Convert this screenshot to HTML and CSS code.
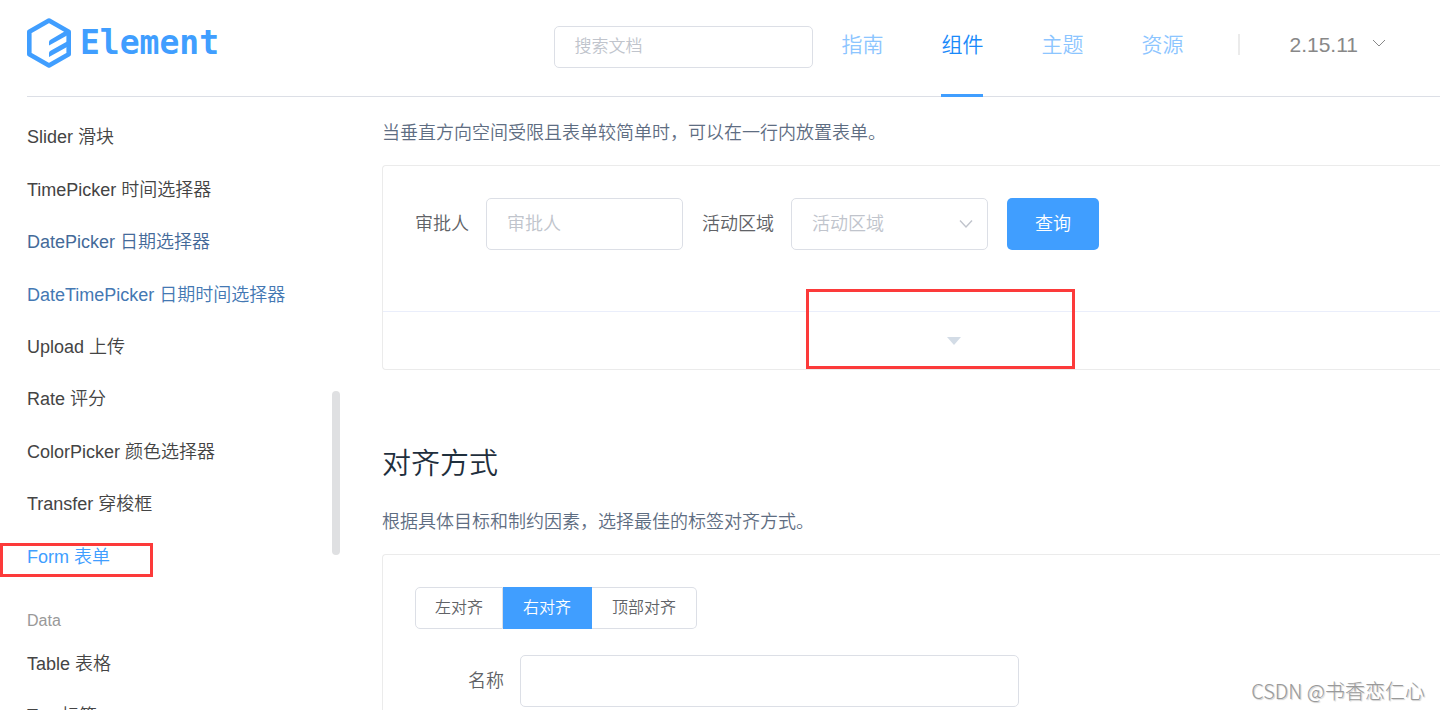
FILE: index.html
```html
<!DOCTYPE html>
<html lang="zh-CN">
<head>
<meta charset="utf-8">
<title>Element</title>
<link rel="stylesheet" href="styles.css">
</head>
<body>
<header class="header">
  <a class="logo" href="#">
    <svg class="logo-mark" viewBox="0 0 44 50" aria-hidden="true">
      <path d="M22 2.6 41.7 13.8V36.2L22 47.4 2.3 36.2V13.8Z" fill="none" stroke="#409eff" stroke-width="4.6" stroke-linejoin="round"/>
      <path d="M22 27.500V24Q22 22.500 23.500 21.700L40 12V17.500ZM22 39V35Q22 33.600 23.500 32.800L40 23.500V29Z" fill="#409eff"/>
    </svg>
    <span class="logo-text">Element</span>
  </a>
  <input class="search" type="text" placeholder="搜索文档" aria-label="搜索文档">
  <nav class="nav">
    <a class="nav-item" href="#">指南</a>
    <a class="nav-item nav-item-active" href="#">组件</a>
    <a class="nav-item" href="#">主题</a>
    <a class="nav-item" href="#">资源</a>
  </nav>
  <span class="divider"></span>
  <button class="version" type="button">2.15.11
    <svg class="version-arrow" viewBox="0 0 14 10" aria-hidden="true"><path d="M1 1 7 7 13 1" fill="none" stroke="#888" stroke-width="1"/></svg>
  </button>
</header>

<div class="page">
  <aside class="sidebar">
    <ul class="menu">
      <li><a class="menu-link" href="#">Slider 滑块</a></li>
      <li><a class="menu-link" href="#">TimePicker 时间选择器</a></li>
      <li><a class="menu-link menu-link-fading" href="#">DatePicker 日期选择器</a></li>
      <li><a class="menu-link menu-link-hover" href="#">DateTimePicker 日期时间选择器</a></li>
      <li><a class="menu-link" href="#">Upload 上传</a></li>
      <li><a class="menu-link" href="#">Rate 评分</a></li>
      <li><a class="menu-link" href="#">ColorPicker 颜色选择器</a></li>
      <li><a class="menu-link" href="#">Transfer 穿梭框</a></li>
      <li><a class="menu-link menu-link-active" href="#">Form 表单</a></li>
    </ul>
    <div class="menu-title">Data</div>
    <ul class="menu-data">
      <li><a class="menu-link" href="#">Table 表格</a></li>
      <li><a class="menu-link" href="#">Tag 标签</a></li>
    </ul>
    <span class="scroll-thumb"></span>
  </aside>

  <main class="content">
    <p class="text">当垂直方向空间受限且表单较简单时，可以在一行内放置表单。</p>
    <section class="demo">
      <form class="inline-form">
        <label class="label" for="approver">审批人</label>
        <input class="field" id="approver" type="text" placeholder="审批人">
        <label class="label" for="region">活动区域</label>
        <span class="select-wrap">
          <select class="field select" id="region"><option>活动区域</option></select>
          <svg class="select-arrow" viewBox="0 0 14 10" aria-hidden="true"><path d="M1 1.500 7 8 13 1.500" fill="none" stroke="#c0c4cc" stroke-width="1.400"/></svg>
        </span>
        <button class="submit" type="button">查询</button>
      </form>
      <button class="expand" type="button" aria-label="显示代码">
        <svg class="caret" viewBox="0 0 14 8" aria-hidden="true"><path d="M0 0H14L7 8Z" fill="#d3dce6"/></svg>
      </button>
    </section>

    <h3 class="heading">对齐方式</h3>
    <p class="text">根据具体目标和制约因素，选择最佳的标签对齐方式。</p>
    <section class="demo">
      <form class="align-form">
        <div class="radio-group">
          <label class="radio"><input type="radio" name="align">左对齐</label>
          <label class="radio"><input type="radio" name="align" checked>右对齐</label>
          <label class="radio"><input type="radio" name="align">顶部对齐</label>
        </div>
        <div class="form-row">
          <label class="row-label" for="name">名称</label>
          <input class="field name-field" id="name" type="text">
        </div>
      </form>
    </section>
  </main>
</div>

<span class="mark mark-menu"></span>
<span class="mark mark-expand"></span>
<span class="watermark">CSDN @书香恋仁心</span>
</body>
</html>
```
FILE: styles.css
```css
* {
  box-sizing: border-box;
}

body {
  position: relative;
  height: 100vh;
  margin: 0;
  overflow: hidden;
  background: #fff;
  color: #606266;
  font-family: "Liberation Sans", "Noto Sans CJK SC", sans-serif;
  font-size: 18px;
  font-weight: 350;
}

a {
  text-decoration: none;
}

ul {
  margin: 0;
  padding: 0;
  list-style: none;
}

input,
select,
button {
  margin: 0;
  font: inherit;
}

/* Header */
.header {
  display: flex;
  align-items: flex-start;
  height: 97px;
  margin-left: 27px;
  padding-right: 54px;
  border-bottom: 1px solid #dcdfe6;
}

.logo {
  display: flex;
  align-items: center;
  gap: 9px;
  margin: 17px auto 0 0;
  color: #409eff;
}

.logo-mark {
  width: 44px;
  height: 50px;
}

.logo-text {
  font-family: "DejaVu Sans Mono", monospace;
  font-size: 33px;
  font-weight: 700;
  line-height: 52px;
}

.search {
  width: 259px;
  height: 42px;
  margin-top: 26px;
  padding: 0 19px;
  border: 1px solid #dcdfe6;
  border-radius: 5px;
  font-size: 17px;
}

::placeholder {
  color: #c0c4cc;
  opacity: 1;
}

.nav {
  display: flex;
  gap: 58px;
  margin-left: 28px;
}

.nav-item {
  height: 97px;
  color: #8cc5ff;
  font-size: 21px;
  line-height: 90px;
}

.nav-item-active {
  border-bottom: 3px solid #409eff;
  color: #1989fa;
}

.divider {
  width: 2px;
  height: 21px;
  margin: 34px 49px 0 55px;
  background: #ebebeb;
}

.version {
  display: flex;
  align-items: center;
  gap: 14px;
  height: 90px;
  padding: 0;
  border: 0;
  background: none;
  color: #888;
  font-size: 21px;
}

.version-arrow {
  width: 14px;
  height: 10px;
  margin-bottom: 2px;
}

/* Sidebar */
.page {
  display: flex;
}

.sidebar {
  position: relative;
  flex: none;
  width: 340px;
  padding: 14px 0 0 27px;
}

.menu {
  display: grid;
  grid-auto-rows: 1fr;
  align-items: center;
  height: 472px;
}

.menu-link {
  color: #444;
  line-height: 52px;
}

.menu-link-fading {
  color: #446a99;
}

.menu-link-hover {
  color: #4478b3;
}

.menu-link-active {
  color: #409eff;
}

.menu-title {
  margin-top: 24px;
  color: #999;
  font-size: 16px;
  line-height: 28px;
}

.menu-data {
  padding-top: 3px;
}

.scroll-thumb {
  position: absolute;
  top: 294px;
  right: 0;
  width: 8px;
  height: 164px;
  border-radius: 4px;
  background: #dfe0e2;
}

/* Content */
.content {
  flex: 1;
  min-width: 0;
  padding: 23px 0 0 42px;
}

.text {
  margin: 0 0 18px;
  color: #5e6d82;
  line-height: 27px;
}

.heading {
  margin: 73px 0 23px;
  color: #1f2f3d;
  font-size: 29px;
  font-weight: 350;
  line-height: 43px;
}

.demo {
  border: 1px solid #ebebeb;
  border-right: 0;
  border-radius: 4px 0 0 4px;
}

.inline-form {
  display: flex;
  align-items: center;
  padding: 32px 32px 61px;
}

.label {
  padding-right: 17px;
  line-height: 50px;
}

.field {
  width: 197px;
  height: 52px;
  margin-right: 19px;
  padding: 0 20px;
  border: 1px solid #dcdfe6;
  border-radius: 5px;
  background: #fff;
  color: #606266;
}

.select-wrap {
  position: relative;
}

.select {
  appearance: none;
  color: #c0c4cc;
}

.select-arrow {
  position: absolute;
  top: 21px;
  right: 34px;
  width: 14px;
  height: 10px;
  pointer-events: none;
}

.submit {
  width: 92px;
  height: 52px;
  padding: 0 0 4px;
  border: 0;
  border-radius: 5px;
  background: #409eff;
  color: #fff;
}

.expand {
  display: flex;
  align-items: center;
  justify-content: center;
  width: 100%;
  height: 58px;
  padding: 0 0 0 85px;
  border: 0;
  border-top: 1px solid #eaeefb;
  background: none;
}

.caret {
  width: 14px;
  height: 8px;
}

.align-form {
  padding: 32px;
}

.radio-group {
  display: flex;
}

.radio {
  position: relative;
  height: 42px;
  padding: 0 20px;
  border: 1px solid #dcdfe6;
  border-left: 0;
  font-size: 16px;
  line-height: 40px;
}

.radio:first-child {
  padding: 0 19px;
  border-left: 1px solid #dcdfe6;
  border-radius: 5px 0 0 5px;
}

.radio:last-child {
  border-radius: 0 5px 5px 0;
}

.radio:has(:checked) {
  border-color: #409eff;
  background: #409eff;
  color: #fff;
}

.radio input {
  position: absolute;
  opacity: 0;
}

.form-row {
  display: flex;
  align-items: center;
  margin-top: 26px;
}

.row-label {
  width: 105px;
  padding-right: 16px;
  line-height: 50px;
  text-align: right;
}

.name-field {
  width: 499px;
}

/* Overlays */
.mark {
  position: absolute;
  border: 3px solid #fc3a3a;
}

.mark-menu {
  top: 543px;
  left: 0;
  width: 153px;
  height: 34px;
}

.mark-expand {
  top: 289px;
  left: 806px;
  width: 269px;
  height: 80px;
}

.watermark {
  position: absolute;
  right: 15px;
  bottom: 4px;
  color: #999;
  font-family: "Noto Sans CJK SC", sans-serif;
  font-size: 20px;
  font-weight: 300;
  line-height: 30px;
  text-shadow: 1px 1px 1px #ccc;
}
```
